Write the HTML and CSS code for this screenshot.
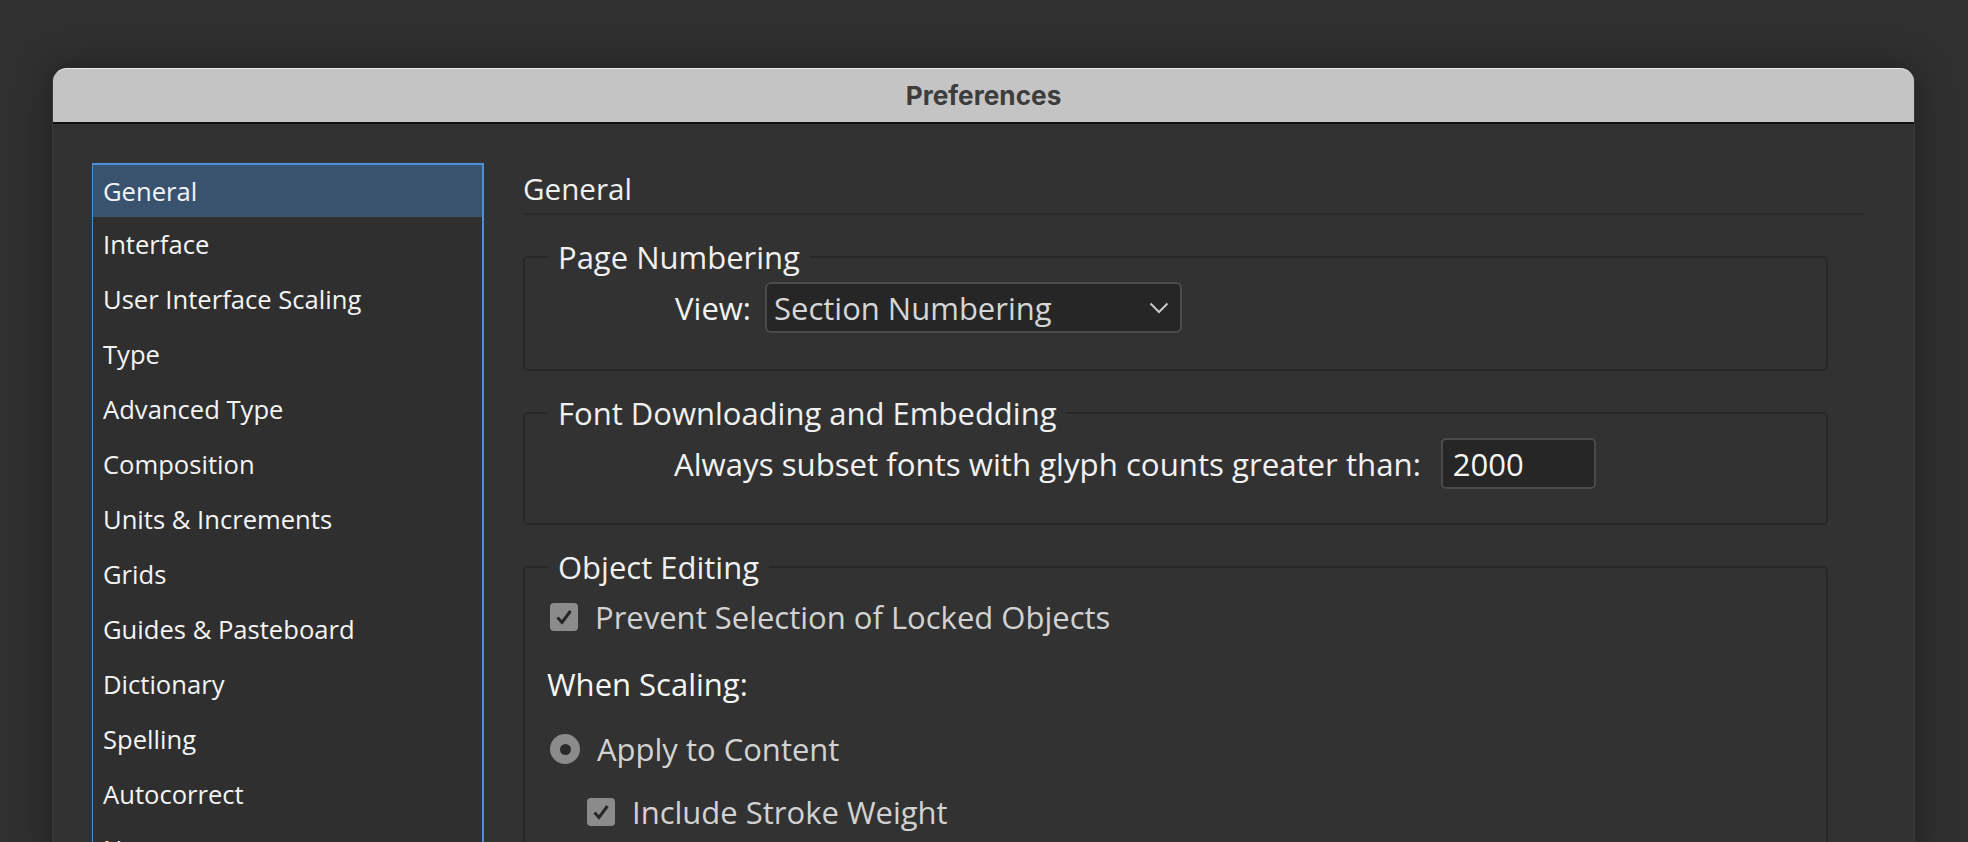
FILE: index.html
```html
<!DOCTYPE html>
<html lang="en">
<head>
<meta charset="utf-8">
<title>Preferences</title>
<link rel="stylesheet" href="styles.css">
</head>
<body>
<div class="window">
  <div class="titlebar"><span class="title">Preferences</span></div>
  <div class="window-body">
    <ul class="nav">
      <li class="nav-item is-selected"><span>General</span></li>
      <li class="nav-item"><span>Interface</span></li>
      <li class="nav-item"><span>User Interface Scaling</span></li>
      <li class="nav-item"><span>Type</span></li>
      <li class="nav-item"><span>Advanced Type</span></li>
      <li class="nav-item"><span>Composition</span></li>
      <li class="nav-item"><span>Units &amp; Increments</span></li>
      <li class="nav-item"><span>Grids</span></li>
      <li class="nav-item"><span>Guides &amp; Pasteboard</span></li>
      <li class="nav-item"><span>Dictionary</span></li>
      <li class="nav-item"><span>Spelling</span></li>
      <li class="nav-item"><span>Autocorrect</span></li>
      <li class="nav-item"><span>Notes</span></li>
    </ul>
    <main class="panel">
      <h1 class="panel-title">General</h1>

      <fieldset class="group group-page">
        <legend>Page Numbering</legend>
        <div class="field-row">
          <span class="field-label">View:</span>
          <div class="select">
            <span class="select-value">Section Numbering</span>
            <svg class="chevron" width="20" height="12" viewBox="0 0 20 12"><path d="M1.5 1.5 L10 10 L18.5 1.5" fill="none" stroke="#c9c9c9" stroke-width="2"/></svg>
          </div>
        </div>
      </fieldset>

      <fieldset class="group group-font">
        <legend>Font Downloading and Embedding</legend>
        <div class="field-row">
          <span class="field-text">Always subset fonts with glyph counts greater than:</span>
          <div class="text-input">2000</div>
        </div>
      </fieldset>

      <fieldset class="group group-object">
        <legend>Object Editing</legend>
        <div class="check-row row-prevent">
          <span class="checkbox"><svg width="28" height="28" viewBox="0 0 28 28"><path d="M7.5 14.5 L12 19.5 L20.5 8" fill="none" stroke="#262626" stroke-width="3"/></svg></span>
          <span class="check-label">Prevent Selection of Locked Objects</span>
        </div>
        <div class="subhead row-when">When Scaling:</div>
        <div class="check-row row-apply">
          <span class="radio"><span class="radio-dot"></span></span>
          <span class="check-label">Apply to Content</span>
        </div>
        <div class="check-row row-stroke">
          <span class="checkbox"><svg width="28" height="28" viewBox="0 0 28 28"><path d="M7.5 14.5 L12 19.5 L20.5 8" fill="none" stroke="#262626" stroke-width="3"/></svg></span>
          <span class="check-label">Include Stroke Weight</span>
        </div>
      </fieldset>
    </main>
  </div>
</div>
</body>
</html>
```

FILE: styles.css
```css
* { box-sizing: border-box; }
html, body { margin: 0; padding: 0; }
body {
  width: 1968px;
  height: 842px;
  overflow: hidden;
  background: #303030;
  font-family: "Open Sans", "Noto Sans", sans-serif;
  color: #eeeeee;
}
.window {
  margin: 68px 0 0 52px;
  width: 1863px;
  height: 800px;
  border-radius: 14px 14px 0 0;
  background: #323232;
  box-shadow: 0 0 36px rgba(0,0,0,0.35);
  border-left: 1px solid #3a3a3a;
  border-right: 1px solid #3a3a3a;
}
.titlebar {
  height: 56px;
  background: #c4c4c4;
  border-top: 1px solid #e9e9e9;
  border-bottom: 2px solid #101010;
  border-radius: 14px 14px 0 0;
  display: flex;
  align-items: center;
  justify-content: center;
}
.title {
  font-family: Inter, Roboto, sans-serif;
  font-weight: 700;
  font-size: 26.2px;
  color: #3d3d3d;
}
.window-body {
  display: flex;
  padding: 39px 49px 0 39px;
  gap: 39px;
}
.nav {
  list-style: none;
  margin: 0;
  padding: 0;
  width: 392px;
  flex: none;
  height: 720px;
  border: 2px solid #4a8fd8;
  border-left-width: 1px;
  background: #2f2f2f;
}
.nav-item {
  height: 55px;
  display: flex;
  align-items: center;
  padding-left: 10px;
  font-size: 25.6px;
  color: #f4f4f4;
}
.nav-item:first-child { height: 52px; }
.nav-item.is-selected { background: #39536f; }
.panel { flex: 1; min-width: 0; }
.panel-title {
  margin: 0;
  height: 52px;
  display: flex;
  align-items: center;
  font-size: 29.6px;
  font-weight: 400;
  color: #f0f0f0;
  border-bottom: 2px solid #2a2a2a;
}
.group {
  margin: 25px 37px 0 0;
  padding: 8px 0 34px 0;
  border: 2px solid #272727;
  border-radius: 5px;
  min-width: 0;
}
.group-page { padding-bottom: 36px; }
.group legend {
  margin-left: 23px;
  padding: 0 10px;
  height: 34px;
  line-height: 34px;
  font-size: 31px;
  color: #f0f0f0;
}
.field-row {
  display: flex;
  align-items: center;
  height: 51px;
  padding-left: 149px;
}
.field-label {
  width: 77px;
  text-align: right;
  font-size: 31px;
  color: #f2f2f2;
  margin-right: 14px;
  white-space: nowrap;
}
.field-text {
  font-size: 31.2px;
  color: #f2f2f2;
  margin-right: 20px;
  white-space: nowrap;
}
.select {
  width: 417px;
  height: 51px;
  background: #262626;
  border: 2px solid #4b4b4b;
  border-radius: 6px;
  display: flex;
  align-items: center;
  justify-content: space-between;
  padding: 0 11px 0 7px;
}
.select-value { font-size: 31px; color: #d6d6d6; }
.chevron { display: block; }
.text-input {
  width: 155px;
  height: 51px;
  background: #262626;
  border: 2px solid #4b4b4b;
  border-radius: 5px;
  display: flex;
  align-items: center;
  padding-left: 10px;
  font-size: 31px;
  color: #f6f6f6;
}
.check-row {
  display: flex;
  align-items: center;
  height: 34px;
  padding-left: 25px;
}
.checkbox {
  width: 28px;
  height: 28px;
  border-radius: 4px;
  background: #8b8b8b;
  flex: none;
  margin-right: 17px;
}
.checkbox svg { display: block; }
.radio {
  width: 30px;
  height: 30px;
  border-radius: 50%;
  background: #8b8b8b;
  flex: none;
  margin-right: 17px;
  display: flex;
  align-items: center;
  justify-content: center;
}
.radio-dot { width: 11px; height: 11px; border-radius: 50%; background: #2b2b2b; }
.check-label { font-size: 31px; color: #d2d2d2; white-space: nowrap; }
.subhead {
  height: 34px;
  display: flex;
  align-items: center;
  padding-left: 22px;
  font-size: 31px;
  color: #f6f6f6;
}
.row-prevent { margin-top: 8px; }
.row-when { margin-top: 33px; }
.row-apply { margin-top: 31px; }
.row-stroke { margin-top: 29px; padding-left: 62px; }
```
